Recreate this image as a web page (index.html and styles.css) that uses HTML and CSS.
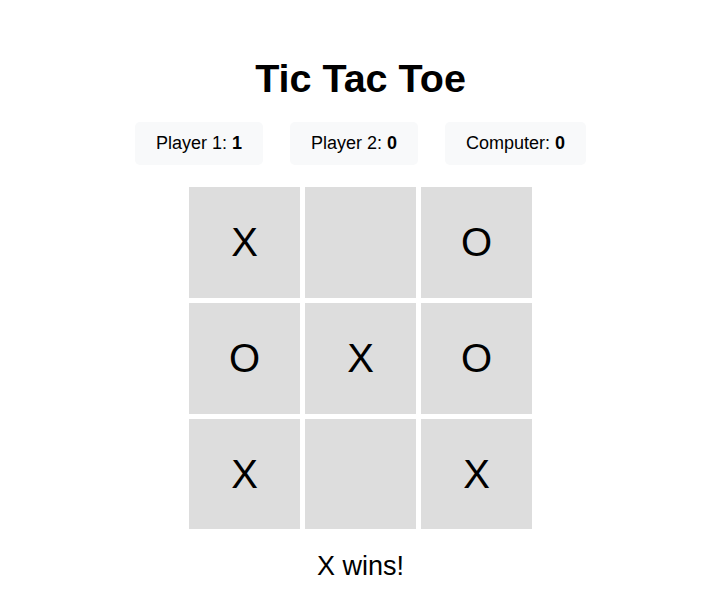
FILE: index.html
```html
<!DOCTYPE html>
<html lang="en">
<head>
<meta charset="utf-8">
<title>Tic Tac Toe</title>
<link rel="stylesheet" href="styles.css">
</head>
<body>
<main class="game">
  <h1 class="title">Tic Tac Toe</h1>
  <div class="scores">
    <div class="score">Player 1: <b>1</b></div>
    <div class="score">Player 2: <b>0</b></div>
    <div class="score">Computer: <b>0</b></div>
  </div>
  <div class="board">
    <div class="cell">X</div>
    <div class="cell"></div>
    <div class="cell">O</div>
    <div class="cell">O</div>
    <div class="cell">X</div>
    <div class="cell">O</div>
    <div class="cell">X</div>
    <div class="cell"></div>
    <div class="cell">X</div>
  </div>
  <div class="status">X wins!</div>
</main>
</body>
</html>
```

FILE: styles.css
```css
html, body {
  margin: 0;
  padding: 0;
  background: #fff;
}
body {
  font-family: "Liberation Sans", Arial, sans-serif;
  color: #000;
}
.game {
  display: flex;
  flex-direction: column;
  align-items: center;
  padding-top: 55px;
  padding-right: 2px;
}
.title {
  margin: 0;
  font-size: 39.5px;
  font-weight: bold;
  line-height: 46px;
}
.scores {
  display: flex;
  gap: 27px;
  margin-top: 21px;
}
.score {
  background: #f8f9fa;
  border-radius: 5px;
  padding: 11px 21px;
  font-size: 18px;
  line-height: 21px;
}
.score b {
  font-weight: bold;
}
.board {
  display: grid;
  grid-template-columns: repeat(3, 111px);
  grid-template-rows: 111px 111px 110px;
  gap: 5px;
  margin-top: 22px;
}
.cell {
  background: #ddd;
  display: flex;
  align-items: center;
  justify-content: center;
  font-size: 40px;
}
.status {
  margin-top: 21px;
  font-size: 27px;
  line-height: 32px;
}
```
